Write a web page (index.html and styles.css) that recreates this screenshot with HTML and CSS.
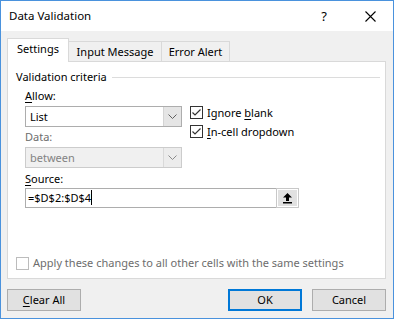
FILE: index.html
```html
<!DOCTYPE html>
<html lang="en">
<head>
    <meta charset="UTF-8">
    <title>Data Validation</title>
    <link rel="stylesheet" href="styles.css">
</head>
<body>
    <div class="dialog">
        <div class="titlebar">
            <span class="title">Data Validation</span>
            <span class="help">?</span>
            <svg class="close" width="11" height="11" viewBox="0 0 11 11">
                <path d="M0.5 0.5 L10.5 10.5 M10.5 0.5 L0.5 10.5" stroke="#000" stroke-width="1.1" fill="none"/>
            </svg>
        </div>

        <div class="content">
            <div class="tabs">
                <div class="tab active">Settings</div>
                <div class="tab tab-input">Input Message</div>
                <div class="tab tab-error">Error Alert</div>
            </div>

            <div class="panel">
                <div class="legend">
                    <span>Validation criteria</span>
                    <div class="legend-line"></div>
                </div>

                <div class="criteria">
                    <div class="left-col">
                        <div class="label"><u>A</u>llow:</div>
                        <div class="combo">
                            <span class="combo-text">List</span>
                            <span class="combo-btn">
                                <svg width="9" height="5" viewBox="0 0 9 5"><path d="M0.5 0.5 L4.5 4.5 L8.5 0.5" stroke="#606060" fill="none"/></svg>
                            </span>
                        </div>
                        <div class="label disabled">Data:</div>
                        <div class="combo combo-disabled">
                            <span class="combo-text">between</span>
                            <span class="combo-btn">
                                <svg width="9" height="5" viewBox="0 0 9 5"><path d="M0.5 0.5 L4.5 4.5 L8.5 0.5" stroke="#8a8a8a" fill="none"/></svg>
                            </span>
                        </div>
                    </div>
                    <div class="right-col">
                        <div class="check-row">
                            <span class="checkbox checked">
                                <svg width="11" height="11" viewBox="0 0 11 11"><path d="M1.5 5.5 L4 8 L9.5 2.5" stroke="#333" stroke-width="1.2" fill="none"/></svg>
                            </span>
                            <span>Ignore <u>b</u>lank</span>
                        </div>
                        <div class="check-row">
                            <span class="checkbox checked">
                                <svg width="11" height="11" viewBox="0 0 11 11"><path d="M1.5 5.5 L4 8 L9.5 2.5" stroke="#333" stroke-width="1.2" fill="none"/></svg>
                            </span>
                            <span><u>I</u>n-cell dropdown</span>
                        </div>
                    </div>
                </div>

                <div class="label source-label"><u>S</u>ource:</div>
                <div class="source">
                    <span class="source-text">=$D$2:$D$4<span class="caret"></span></span>
                    <span class="source-btn">
                        <svg width="11" height="12" viewBox="0 0 11 12">
                            <path d="M5.5 1 L1 5.5 L4 5.5 L4 9 L7 9 L7 5.5 L10 5.5 Z" fill="#000"/>
                            <rect x="1" y="10" width="9" height="1.5" fill="#000"/>
                        </svg>
                    </span>
                </div>

                <div class="apply-row">
                    <span class="checkbox checkbox-disabled"></span>
                    <span>Apply these changes to all other cells with the same settings</span>
                </div>
            </div>

            <div class="footer">
                <div class="btn"><u>C</u>lear All</div>
                <div class="spacer"></div>
                <div class="btn btn-default">OK</div>
                <div class="btn">Cancel</div>
            </div>
        </div>
    </div>
</body>
</html>
```

FILE: styles.css
```css
* {
    box-sizing: border-box;
}
body {
    margin: 0;
    padding: 0;
    font-family: 'Noto Sans', 'Open Sans', sans-serif;
    font-size: 11px;
    color: #000;
    background: #fff;
}
u {
    text-decoration: underline;
    text-underline-offset: 2px;
}
.dialog {
    width: 394px;
    height: 319px;
    border: 1px solid #4a92dd;
    display: flex;
    flex-direction: column;
}
.titlebar {
    height: 30px;
    background: #fff;
    display: flex;
    align-items: center;
    padding-left: 8px;
    line-height: 16px;
    font-size: 11.5px;
}
.title {
    flex: 1;
}
.help {
    margin-right: 38px;
    font-size: 13px;
}
.close {
    margin-right: 17px;
}
.content {
    flex: 1;
    background: #f0f0f0;
    padding: 7px 7px 0 6px;
}
.tabs {
    display: flex;
    align-items: flex-end;
    height: 23px;
    position: relative;
    z-index: 1;
}
.tab {
    height: 20px;
    border: 1px solid #d9d9d9;
    border-bottom: none;
    border-left: none;
    background: #f0f0f0;
    line-height: 19px;
    text-align: center;
    white-space: nowrap;
}
.tab-input {
    width: 93px;
}
.tab-error {
    width: 68px;
}
.tab.active {
    width: 62px;
    height: 24px;
    background: #fff;
    border-left: 1px solid #d9d9d9;
    line-height: 20px;
    margin-bottom: -1px;
}
.panel {
    background: #fff;
    border: 1px solid #d9d9d9;
    height: 218px;
    padding: 7px 0 0 8px;
}
.legend {
    display: flex;
    align-items: center;
    height: 16px;
    line-height: 16px;
}
.legend-line {
    flex: 1;
    height: 1px;
    background: #dcdcdc;
    margin: 0 5px 0 5px;
}
.criteria {
    display: flex;
    padding-left: 9px;
    margin-top: 3px;
}
.left-col {
    width: 157px;
}
.label {
    height: 16px;
    line-height: 16px;
    margin-bottom: 2px;
}
.label.disabled {
    color: #6d6d6d;
}
.combo {
    height: 21px;
    border: 1px solid #adadad;
    display: flex;
    background: #fff;
    margin-bottom: 2px;
}
.combo-text {
    flex: 1;
    padding-left: 4px;
    line-height: 19px;
}
.combo-btn {
    width: 18px;
    background: #e5e5e5;
    border-left: 1px solid #d4d4d4;
    display: flex;
    align-items: center;
    justify-content: center;
}
.combo-disabled {
    background: #f0f0f0;
    border-color: #cccccc;
    color: #838383;
}
.combo-disabled .combo-btn {
    background: #ececec;
    border-left-color: #d9d9d9;
}
.right-col {
    padding-left: 8px;
    padding-top: 15px;
}
.check-row {
    display: flex;
    align-items: center;
    height: 19px;
    line-height: 16px;
}
.checkbox {
    width: 13px;
    height: 13px;
    border: 1px solid #333;
    background: #fff;
    margin-right: 4px;
    display: flex;
    align-items: center;
    justify-content: center;
}
.source-label {
    margin-left: 9px;
    margin-top: 1px;
    margin-bottom: 1px;
}
.source {
    margin-left: 9px;
    width: 274px;
    height: 20px;
    border: 1px solid #adadad;
    display: flex;
}
.source-text {
    flex: 1;
    padding-left: 2px;
    line-height: 18px;
}
.caret {
    display: inline-block;
    width: 1px;
    height: 15px;
    background: #000;
    vertical-align: -3px;
}
.source-btn {
    width: 21px;
    background: #e1e1e1;
    border: 1px solid #fff;
    outline: 1px solid #c8c8c8;
    display: flex;
    align-items: center;
    justify-content: center;
}
.apply-row {
    display: flex;
    align-items: center;
    margin-top: 47px;
    color: #6d6d6d;
    line-height: 16px;
}
.checkbox-disabled {
    border-color: #bcbcbc;
}
.footer {
    display: flex;
    margin-top: 10px;
    gap: 10px;
}
.spacer {
    flex: 1;
}
.btn {
    width: 74px;
    height: 22px;
    background: #e1e1e1;
    border: 1px solid #adadad;
    text-align: center;
    line-height: 20px;
}
.btn-default {
    border: 2px solid #0078d7;
    line-height: 18px;
}
```
